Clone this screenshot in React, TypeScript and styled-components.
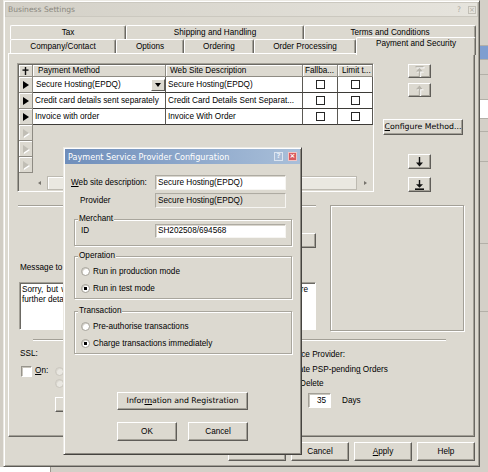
import { Fragment } from 'react';
import styled, { createGlobalStyle, css } from 'styled-components';

const FACE = '#dcd9d0';
const LIGHT = '#ffffff';
const SHADE = '#a3a097';
const DARK = '#6b6963';

const GlobalStyle = createGlobalStyle`
  * { box-sizing: border-box; }
  body {
    margin: 0;
    background: #d4d0c8;
    font-family: 'Liberation Sans', Arial, sans-serif;
    font-size: 8.2px;
    line-height: 10px;
    color: #000;
  }
  u { text-underline-offset: 1px; }
`;

const Screen = styled.div`
  position: relative;
  width: 488px;
  height: 472px;
  overflow: hidden;
  display: flex;
  flex-direction: column;
`;

const Desktop = styled.div`
  display: flex;
  height: 467px;
`;

const LeftEdge = styled.div`
  width: 3px;
  background: #d1cdc4;
`;

const Window = styled.div`
  width: 477px;
  height: 467px;
  flex-shrink: 0;
  padding: 1px;
  display: flex;
  flex-direction: column;
  background: ${FACE};
  border: 1px solid;
  border-color: #eceae4 #5c5a55 #5c5a55 #eceae4;
  box-shadow: inset 1px 1px ${LIGHT}, inset -1px -1px ${SHADE};
`;

const TitleBar = styled.div`
  height: 15px;
  flex-shrink: 0;
  display: flex;
  align-items: center;
  justify-content: space-between;
  padding: 0 1px 0 2px;
  border: 1px solid #cbc8bf;
  background: linear-gradient(to right, #d3d0c7, #e6e4dd);
  color: #8b887f;
  font-family: 'DejaVu Sans', sans-serif;
  font-size: 7.6px;
`;

const TitleTools = styled.div`
  display: flex;
  align-items: center;
  gap: 7px;
  color: #aeaba2;
`;

const TitleClose = styled.span`
  width: 8px;
  height: 8px;
  display: flex;
  align-items: center;
  justify-content: center;
  border: 1px solid #c2bfb6;
  font-size: 7px;
  line-height: 6px;
`;

const TabStrip = styled.div`
  width: 466px;
  margin: 8px 0 0 5px;
  flex-shrink: 0;
`;

const TabRow = styled.div`
  display: flex;
  height: 14px;
`;

const Tab = styled.div<{ $w: number; $active?: boolean }>`
  position: relative;
  z-index: ${p => (p.$active ? 2 : 1)};
  width: ${p => p.$w}px;
  height: ${p => (p.$active ? 18 : 14)}px;
  margin-top: ${p => (p.$active ? -2 : 0)}px;
  padding-top: ${p => (p.$active ? 1 : 0)}px;
  display: flex;
  align-items: ${p => (p.$active ? 'flex-start' : 'center')};
  justify-content: center;
  background: ${FACE};
  border-top: 1px solid ${LIGHT};
  border-left: 1px solid ${LIGHT};
  border-right: 1px solid ${DARK};
  border-radius: 2px 2px 0 0;
  box-shadow: inset -1px 0 ${SHADE};
  white-space: nowrap;
`;

const Panel = styled.div`
  height: 384px;
  margin: 0 3px;
  flex-shrink: 0;
  padding: 9px 0 0 8px;
  display: flex;
  flex-direction: column;
  border: 1px solid;
  border-color: ${LIGHT} ${DARK} ${DARK} ${LIGHT};
  box-shadow: inset -1px -1px ${SHADE};
`;

const TopSection = styled.div`
  display: flex;
  gap: 9px;
  height: 130px;
  flex-shrink: 0;
`;

const Grid = styled.div`
  width: 357px;
  height: 129px;
  flex-shrink: 0;
  padding: 1px 0 0 1px;
  display: grid;
  grid-template-columns: 14px 133px 137px 35px 1fr;
  grid-template-rows: 12px repeat(6, 16px) 1fr;
  border: 1px solid;
  border-color: ${SHADE} ${LIGHT} ${LIGHT} ${SHADE};
  box-shadow: inset 1px 1px ${DARK};
`;

const raised = css`
  background: ${FACE};
  border-right: 1px solid #8e8b83;
  border-bottom: 1px solid #8e8b83;
  box-shadow: inset 1px 1px ${LIGHT};
`;

const CornerCell = styled.div`
  ${raised};
  display: flex;
  align-items: center;
  justify-content: center;
`;

const HeadCell = styled.div<{ $pad?: number }>`
  ${raised};
  display: flex;
  align-items: center;
  padding-left: ${p => p.$pad ?? 4}px;
  white-space: nowrap;
  overflow: hidden;
`;

const RowHead = styled.div`
  ${raised};
  display: flex;
  align-items: center;
  justify-content: center;
`;

const RowArrow = styled.span<{ $off?: boolean }>`
  width: 0;
  height: 0;
  border-top: 4px solid transparent;
  border-bottom: 4px solid transparent;
  border-left: 6px solid ${p => (p.$off ? '#c1beb5' : '#000')};
  ${p => p.$off && 'filter: drop-shadow(1px 1px 0 #fff);'}
`;

const Cell = styled.div<{ $center?: boolean; $pad?: number }>`
  background: #fff;
  border-right: 1px solid #5b5954;
  border-bottom: 1px solid #3d3b37;
  display: flex;
  align-items: center;
  justify-content: ${p => (p.$center ? 'center' : 'flex-start')};
  padding-left: ${p => (p.$center ? 0 : p.$pad ?? 2)}px;
  white-space: nowrap;
  overflow: hidden;
`;

const ComboText = styled.span`
  flex: 1;
`;

const DropButton = styled.span`
  width: 14px;
  height: 12px;
  display: flex;
  align-items: center;
  justify-content: center;
  background: ${FACE};
  border: 1px solid;
  border-color: ${LIGHT} #5f5d58 #5f5d58 ${LIGHT};
`;

const DropArrow = styled.span`
  width: 0;
  height: 0;
  border-left: 3.5px solid transparent;
  border-right: 3.5px solid transparent;
  border-top: 4px solid #000;
`;

const GridCheck = styled.span`
  width: 9px;
  height: 9px;
  border: 1px solid #262626;
  background: #fff;
`;

const EmptyCell = styled.div`
  grid-column: span 4;
  background: ${FACE};
`;

const BlankCell = styled.div`
  background: ${FACE};
`;

const ScrollCell = styled.div`
  grid-column: span 4;
  padding-top: 3px;
  background: ${FACE};
`;

const ScrollBar = styled.div`
  height: 14px;
  display: flex;
`;

const ScrollArrow = styled.span<{ $w: number; $right?: boolean }>`
  width: ${p => p.$w}px;
  display: flex;
  align-items: center;
  justify-content: center;
  &::before {
    content: '';
    border-top: 2.5px solid transparent;
    border-bottom: 2.5px solid transparent;
    ${p => (p.$right ? 'border-left' : 'border-right')}: 3px solid #77746d;
  }
`;

const ScrollThumb = styled.span`
  flex: 1;
  margin-left: 1px;
  background: #eae8e1;
  border: 1px solid #bdbab1;
  box-shadow: inset 1px 1px ${LIGHT};
`;

const PushButton = styled.button<{ $w: number; $h: number }>`
  width: ${p => p.$w}px;
  height: ${p => p.$h}px;
  flex-shrink: 0;
  padding: 0;
  margin: 0;
  font: inherit;
  color: #000;
  background: ${FACE};
  border: 1px solid;
  border-color: ${LIGHT} #5f5d58 #5f5d58 ${LIGHT};
  box-shadow: inset -1px -1px ${SHADE};
  display: flex;
  align-items: center;
  justify-content: center;
  white-space: nowrap;
`;

const SideColumn = styled.div`
  width: 80px;
  display: flex;
  flex-direction: column;
  align-items: flex-start;
`;

const SideButton = styled(PushButton)<{ $mt: number; $ml?: number }>`
  margin: ${p => p.$mt}px 0 0 ${p => p.$ml ?? 25}px;
`;

const WideText = styled.span`
  font-family: 'DejaVu Sans', sans-serif;
  font-size: 7.8px;
`;

const IconSvg = styled.svg<{ $off?: boolean }>`
  ${p => p.$off && 'filter: drop-shadow(1px 1px 0 #fff);'}
`;

const MiddleSection = styled.div`
  display: flex;
  gap: 14px;
  margin: 12px 0 0 1px;
  flex-shrink: 0;
`;

const LeftCol = styled.div`
  width: 298px;
  display: flex;
  flex-direction: column;
`;

const Groove = styled.div<{ $w?: number; $mt?: number; $ml?: number }>`
  height: 2px;
  width: ${p => (p.$w ? `${p.$w}px` : 'auto')};
  margin: ${p => p.$mt ?? 0}px 0 0 ${p => p.$ml ?? 0}px;
  flex-shrink: 0;
  border-top: 1px solid ${SHADE};
  border-bottom: 1px solid ${LIGHT};
`;

const ButtonLine = styled.div`
  margin-top: 26px;
  display: flex;
  justify-content: flex-end;
`;

const MessageLabel = styled.div`
  margin-top: 15px;
  padding-left: 2px;
  white-space: nowrap;
`;

const MemoBox = styled.div`
  width: 297px;
  height: 48px;
  margin: 9px 0 0 1px;
  padding: 2px 7px 0 2px;
  background: #fff;
  border: 1px solid;
  border-color: ${SHADE} ${LIGHT} ${LIGHT} ${SHADE};
  box-shadow: inset 1px 1px ${DARK};
`;

const MemoLine = styled.div<{ $justify?: boolean }>`
  white-space: nowrap;
  ${p => p.$justify && 'text-align: justify; text-align-last: justify; white-space: normal;'}
`;

const PreviewBox = styled.div`
  width: 134px;
  height: 126px;
  border: 1px solid ${SHADE};
  box-shadow: inset 1px 1px ${LIGHT}, 1px 1px 0 ${LIGHT};
`;

const BottomSection = styled.div`
  display: flex;
  margin: 8px 0 0 3px;
`;

const SslPart = styled.div`
  width: 228px;
  display: flex;
  flex-direction: column;
`;

const SslRow = styled.div`
  display: flex;
  margin-top: 6px;
`;

const CheckLabel = styled.label<{ $w?: number }>`
  width: ${p => (p.$w ? `${p.$w}px` : 'auto')};
  height: 12px;
  padding-left: 1px;
  display: flex;
  align-items: center;
  gap: 3px;
  white-space: nowrap;
`;

const SslOptions = styled.div`
  display: flex;
  flex-direction: column;
  align-items: flex-start;
`;

const OptionRow = styled.div<{ $h: number; $gap?: number; $indent?: number; $mt?: number }>`
  height: ${p => p.$h}px;
  margin-top: ${p => p.$mt ?? 0}px;
  padding-left: ${p => p.$indent ?? 0}px;
  display: flex;
  align-items: center;
  gap: ${p => p.$gap ?? 3}px;
  white-space: nowrap;
`;

const PspPart = styled.div`
  display: flex;
  flex-direction: column;
`;

const CheckBox = styled.span`
  width: 11px;
  height: 11px;
  flex-shrink: 0;
  background: #fff;
  border: 1px solid;
  border-color: #97948c ${LIGHT} ${LIGHT} #97948c;
  box-shadow: inset 1px 1px #c9c6bd;
`;

const Radio = styled.span<{ $on?: boolean; $off?: boolean }>`
  width: 9px;
  height: 9px;
  flex-shrink: 0;
  border-radius: 50%;
  border: 1px solid ${p => (p.$off ? '#c9c6bd' : '#a4a198')};
  background: ${p =>
    p.$on ? 'radial-gradient(circle, #000 0 1.4px, #fff 2px)' : p.$off ? '#e9e7e1' : '#fff'};
  box-shadow: inset 1px 1px ${p => (p.$off ? '#dad7cf' : '#d2cfc7')};
`;

const DaysBox = styled.div`
  width: 23px;
  height: 15px;
  padding-right: 4px;
  display: flex;
  align-items: center;
  justify-content: flex-end;
  background: #fff;
  border: 1px solid;
  border-color: ${SHADE} ${LIGHT} ${LIGHT} ${SHADE};
  box-shadow: inset 1px 1px #c9c6bd;
`;

const WindowButtons = styled.div`
  display: flex;
  justify-content: flex-end;
  gap: 5px;
  margin-top: 5px;
  padding-right: 3px;
`;

const RightStrip = styled.div`
  flex: 1;
  display: flex;
  flex-direction: column;
  background: #d4d0c8;
`;

const StripBand = styled.div<{ $h: number; $bg: string }>`
  height: ${p => p.$h}px;
  flex-shrink: 0;
  background: ${p => p.$bg};
  border-bottom: 1px solid #b3b0a8;
`;

const BottomStrip = styled.div`
  height: 5px;
  display: flex;
`;

const StripWhite = styled.div`
  width: 50px;
  background: #fff;
`;

const StripGrey = styled.div`
  flex: 1;
  background: #d4d0c8;
  border-left: 1px solid #9a978f;
`;

/* dialog */

const Dialog = styled.div`
  position: absolute;
  left: 63px;
  top: 147px;
  width: 239px;
  height: 308px;
  padding: 1px;
  display: flex;
  flex-direction: column;
  background: ${FACE};
  border: 1px solid;
  border-color: #eceae4 #45433f #45433f #eceae4;
  box-shadow: inset 1px 1px ${LIGHT}, inset -1px -1px #8e8b83;
  z-index: 5;
`;

const DialogTitle = styled.div`
  height: 15px;
  flex-shrink: 0;
  display: flex;
  align-items: center;
  justify-content: space-between;
  padding: 0 3px 0 3px;
  background: linear-gradient(to right, #6f8ebb, #a9bfd9);
  color: #fff;
  font-family: 'DejaVu Sans', sans-serif;
  font-size: 8.1px;
  white-space: nowrap;
`;

const CaptionTools = styled.div`
  display: flex;
  gap: 5px;
`;

const CaptionButton = styled.span<{ $close?: boolean }>`
  width: 9px;
  height: 9px;
  display: flex;
  align-items: center;
  justify-content: center;
  border: 1px solid ${p => (p.$close ? '#f1c4c4' : '#dbe4f0')};
  background: ${p => (p.$close ? '#d85a5f' : '#a8bcd7')};
  color: ${p => (p.$close ? '#fff' : '#e6edf6')};
  font-family: 'DejaVu Sans', sans-serif;
  font-size: 7px;
  line-height: 7px;
  font-weight: bold;
`;

const DialogBody = styled.div`
  display: flex;
  flex-direction: column;
  padding: 0 8px 0 6px;
`;

const FieldRow = styled.div<{ $mt?: number }>`
  display: flex;
  align-items: center;
  margin-top: ${p => p.$mt ?? 0}px;
`;

const FieldLabel = styled.span<{ $w: number; $indent?: number }>`
  width: ${p => p.$w}px;
  padding-left: ${p => p.$indent ?? 0}px;
  flex-shrink: 0;
  white-space: nowrap;
`;

const TextBox = styled.div<{ $h: number; $disabled?: boolean }>`
  width: 131px;
  height: ${p => p.$h}px;
  padding: 0 2px;
  display: flex;
  align-items: center;
  background: ${p => (p.$disabled ? FACE : '#fff')};
  border: 1px solid;
  border-color: #aeaba2 #f6f5f2 #f6f5f2 #aeaba2;
  box-shadow: inset 1px 1px #d9d6ce;
  white-space: nowrap;
  overflow: hidden;
`;

const GroupBox = styled.fieldset<{ $mt: number; $pad: string }>`
  margin: ${p => p.$mt}px 0 0 3px;
  padding: ${p => p.$pad};
  min-inline-size: 0;
  border: 1px solid #a9a69d;
  box-shadow: inset 1px 1px ${LIGHT}, 1px 1px 0 ${LIGHT};
`;

const GroupTitle = styled.legend`
  padding: 0 1px;
  margin-left: -3px;
  line-height: 10px;
  background: ${FACE};
`;

const RadioRow = styled.label`
  height: 17px;
  display: flex;
  align-items: center;
  gap: 3px;
  white-space: nowrap;
`;

const DialogButton = styled(PushButton)<{ $mt: number }>`
  margin: ${p => p.$mt}px 0 0 46px;
`;

const DialogButtonRow = styled.div`
  display: flex;
  gap: 11px;
  margin: 12px 0 0 46px;
`;

type MoveKind = 'top' | 'up' | 'down' | 'bottom';

function MoveIcon({ kind, off }: { kind: MoveKind; off?: boolean }) {
  const c = off ? '#b6b3aa' : '#111';
  return (
    <IconSvg width={9} height={10} viewBox="0 0 9 10" $off={off}>
      {kind === 'top' && (
        <>
          <rect x="0.5" y="0" width="8" height="1.4" fill={c} />
          <polygon points="4.5,2 1,5.6 8,5.6" fill={c} />
          <rect x="3.8" y="5" width="1.4" height="5" fill={c} />
        </>
      )}
      {kind === 'up' && (
        <>
          <polygon points="4.5,0.5 1,4.2 8,4.2" fill={c} />
          <rect x="3.8" y="4" width="1.4" height="6" fill={c} />
        </>
      )}
      {kind === 'down' && (
        <>
          <rect x="3.8" y="0" width="1.4" height="6" fill={c} />
          <polygon points="1,5.6 8,5.6 4.5,9.4" fill={c} />
        </>
      )}
      {kind === 'bottom' && (
        <>
          <rect x="3.8" y="0" width="1.4" height="5" fill={c} />
          <polygon points="1,4.2 8,4.2 4.5,7.8" fill={c} />
          <rect x="0" y="8.4" width="9" height="1.6" fill={c} />
        </>
      )}
    </IconSvg>
  );
}

function PlusIcon() {
  return (
    <svg width={7} height={8} viewBox="0 0 7 8">
      <rect x="2.8" y="0" width="1.4" height="8" fill="#111" />
      <rect x="0.5" y="2.4" width="6" height="1.4" fill="#111" />
    </svg>
  );
}

const backTabs = [
  { label: 'Tax', w: 116 },
  { label: 'Shipping and Handling', w: 178 },
  { label: 'Terms and Conditions', w: 172 },
];

const frontTabs = [
  { label: 'Company/Contact', w: 106 },
  { label: 'Options', w: 68 },
  { label: 'Ordering', w: 70 },
  { label: 'Order Processing', w: 102 },
  { label: 'Payment and Security', w: 120, active: true },
];

const methods = [
  { name: 'Secure Hosting(EPDQ)', site: 'Secure Hosting(EPDQ)' },
  { name: 'Credit card details sent separately', site: 'Credit Card Details Sent Separat...' },
  { name: 'Invoice with order', site: 'Invoice With Order' },
];

export default function App() {
  return (
    <>
      <GlobalStyle />
      <Screen>
        <Desktop>
          <LeftEdge />
          <Window>
            <TitleBar>
              <span>Business Settings</span>
              <TitleTools>
                <span>?</span>
                <TitleClose>×</TitleClose>
              </TitleTools>
            </TitleBar>

            <TabStrip>
              <TabRow>
                {backTabs.map(t => (
                  <Tab key={t.label} $w={t.w}>{t.label}</Tab>
                ))}
              </TabRow>
              <TabRow>
                {frontTabs.map(t => (
                  <Tab key={t.label} $w={t.w} $active={t.active}>{t.label}</Tab>
                ))}
              </TabRow>
            </TabStrip>

            <Panel>
              <TopSection>
                <Grid>
                  <CornerCell><PlusIcon /></CornerCell>
                  <HeadCell $pad={5}>Payment Method</HeadCell>
                  <HeadCell>Web Site Description</HeadCell>
                  <HeadCell $pad={2}>Fallba...</HeadCell>
                  <HeadCell $pad={4}>Limit t...</HeadCell>
                  {methods.map((m, i) => (
                    <Fragment key={m.name}>
                      <RowHead><RowArrow /></RowHead>
                      {i === 0 ? (
                        <Cell $pad={3}>
                          <ComboText>{m.name}</ComboText>
                          <DropButton><DropArrow /></DropButton>
                        </Cell>
                      ) : (
                        <Cell>{m.name}</Cell>
                      )}
                      <Cell>{m.site}</Cell>
                      <Cell $center><GridCheck /></Cell>
                      <Cell $center><GridCheck /></Cell>
                    </Fragment>
                  ))}
                  {[0, 1, 2].map(i => (
                    <Fragment key={i}>
                      <RowHead><RowArrow $off /></RowHead>
                      <EmptyCell />
                    </Fragment>
                  ))}
                  <BlankCell />
                  <ScrollCell>
                    <ScrollBar>
                      <ScrollArrow $w={13} />
                      <ScrollThumb />
                      <ScrollArrow $w={16} $right />
                    </ScrollBar>
                  </ScrollCell>
                </Grid>

                <SideColumn>
                  <SideButton $w={23} $h={14} $mt={1}><MoveIcon kind="top" off /></SideButton>
                  <SideButton $w={23} $h={14} $mt={5}><MoveIcon kind="up" off /></SideButton>
                  <SideButton $w={80} $h={16} $mt={22} $ml={0}>
                    <WideText><u>C</u>onfigure Method...</WideText>
                  </SideButton>
                  <SideButton $w={23} $h={15} $mt={19}><MoveIcon kind="down" /></SideButton>
                  <SideButton $w={23} $h={15} $mt={8}><MoveIcon kind="bottom" /></SideButton>
                </SideColumn>
              </TopSection>

              <MiddleSection>
                <LeftCol>
                  <Groove />
                  <ButtonLine>
                    <PushButton $w={70} $h={15}>Edit...</PushButton>
                  </ButtonLine>
                  <MessageLabel>Message to customer:</MessageLabel>
                  <MemoBox>
                    <MemoLine $justify>
                      Sorry, but we could not process your order. Please contact us if you require
                    </MemoLine>
                    <MemoLine>further details.</MemoLine>
                  </MemoBox>
                </LeftCol>
                <PreviewBox />
              </MiddleSection>

              <Groove $w={413} $mt={8} $ml={16} />

              <BottomSection>
                <SslPart>
                  <div>SSL:</div>
                  <SslRow>
                    <CheckLabel $w={35}>
                      <CheckBox />
                      <span><u>O</u>n:</span>
                    </CheckLabel>
                    <SslOptions>
                      <OptionRow $h={12}>
                        <Radio $off />
                        <span>Checkout pages only</span>
                      </OptionRow>
                      <OptionRow $h={12}>
                        <Radio $off />
                        <span>All pages</span>
                      </OptionRow>
                      <SideButton $w={80} $h={15} $mt={8} $ml={0}>Settings...</SideButton>
                    </SslOptions>
                  </SslRow>
                </SslPart>

                <PspPart>
                  <OptionRow $h={12}>Payment Service Provider:</OptionRow>
                  <OptionRow $h={14} $mt={2} $indent={10} $gap={6}>
                    <CheckBox />
                    <span>Automate PSP-pendin<u>g</u> Orders</span>
                  </OptionRow>
                  <OptionRow $h={14} $indent={37} $gap={6}>
                    <Radio />
                    <span>Delete</span>
                  </OptionRow>
                  <OptionRow $h={15} $mt={2} $indent={60} $gap={11}>
                    <DaysBox>35</DaysBox>
                    <span>Days</span>
                  </OptionRow>
                </PspPart>
              </BottomSection>
            </Panel>

            <WindowButtons>
              <PushButton $w={58} $h={19}>OK</PushButton>
              <PushButton $w={58} $h={19}>Cancel</PushButton>
              <PushButton $w={58} $h={19}><span><u>A</u>pply</span></PushButton>
              <PushButton $w={58} $h={19}>Help</PushButton>
            </WindowButtons>
          </Window>

          <RightStrip>
            <StripBand $h={46} $bg="#d4d0c8" />
            <StripBand $h={14} $bg="#7f9ed0" />
            <StripBand $h={15} $bg="#d4d0c8" />
            <StripBand $h={25} $bg="#d4d0c8" />
            <StripBand $h={19} $bg="#ffffff" />
            <StripBand $h={13} $bg="#d4d0c8" />
            <StripBand $h={30} $bg="#d4d0c8" />
            <StripBand $h={82} $bg="#d4d0c8" />
            <StripBand $h={68} $bg="#d4d0c8" />
          </RightStrip>
        </Desktop>

        <BottomStrip>
          <StripWhite />
          <StripGrey />
        </BottomStrip>

        <Dialog>
          <DialogTitle>
            <span>Payment Service Provider Configuration</span>
            <CaptionTools>
              <CaptionButton>?</CaptionButton>
              <CaptionButton $close>×</CaptionButton>
            </CaptionTools>
          </DialogTitle>
          <DialogBody>
            <FieldRow $mt={11}>
              <FieldLabel $w={84}><u>W</u>eb site description:</FieldLabel>
              <TextBox $h={15}>Secure Hosting(EPDQ)</TextBox>
            </FieldRow>
            <FieldRow $mt={3}>
              <FieldLabel $w={84} $indent={9}>Provider</FieldLabel>
              <TextBox $h={15} $disabled>Secure Hosting(EPDQ)</TextBox>
            </FieldRow>

            <GroupBox $mt={6} $pad="0 5px 7px 6px">
              <GroupTitle>Merchant</GroupTitle>
              <FieldRow>
                <FieldLabel $w={74}>ID</FieldLabel>
                <TextBox $h={14}>SH202508/694568</TextBox>
              </FieldRow>
            </GroupBox>

            <GroupBox $mt={5} $pad="2px 5px 1px 6px">
              <GroupTitle>Operation</GroupTitle>
              <RadioRow><Radio /><span>Run in production mode</span></RadioRow>
              <RadioRow><Radio $on /><span>Run in test mode</span></RadioRow>
            </GroupBox>

            <GroupBox $mt={7} $pad="2px 5px 1px 6px">
              <GroupTitle>Transaction</GroupTitle>
              <RadioRow><Radio /><span>Pre-authorise transactions</span></RadioRow>
              <RadioRow><Radio $on /><span>Charge transactions immediately</span></RadioRow>
            </GroupBox>

            <DialogButton $w={131} $h={18} $mt={38}>
              <WideText>Infor<u>m</u>ation and Registration</WideText>
            </DialogButton>

            <DialogButtonRow>
              <PushButton $w={60} $h={19}>OK</PushButton>
              <PushButton $w={60} $h={19}>Cancel</PushButton>
            </DialogButtonRow>
          </DialogBody>
        </Dialog>
      </Screen>
    </>
  );
}
